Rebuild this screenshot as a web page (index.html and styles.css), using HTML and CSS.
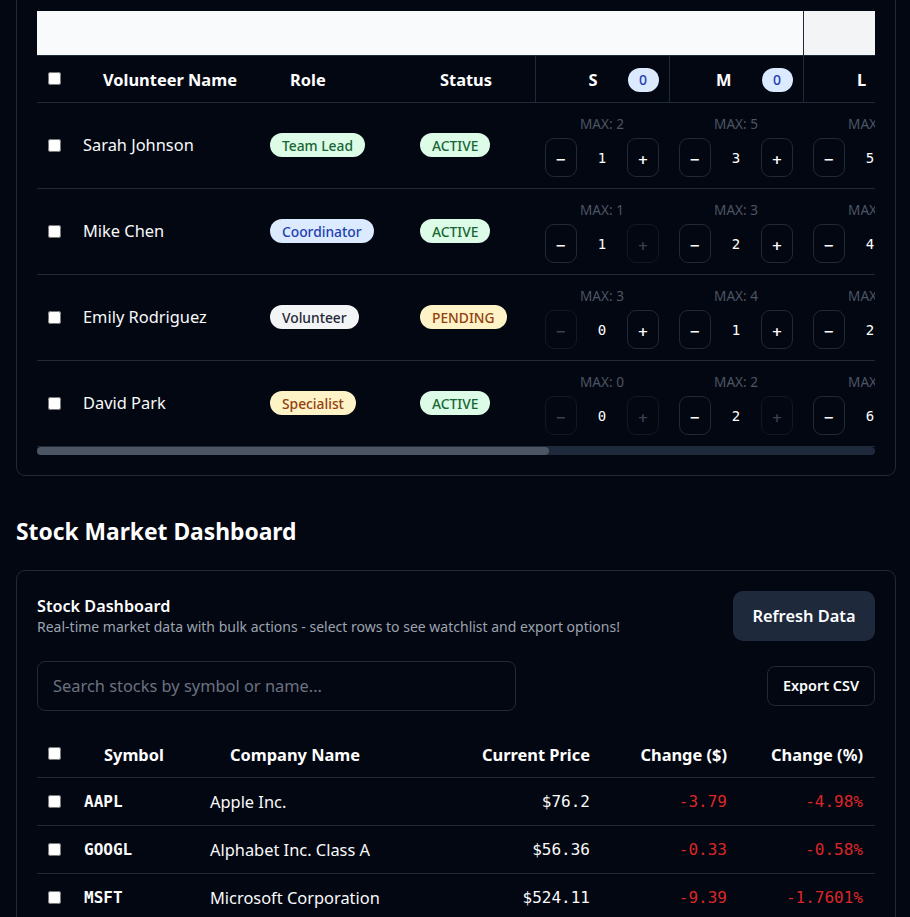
FILE: index.html
```html
<!DOCTYPE html>
<html lang="en">
<head>
<meta charset="utf-8">
<title>Dashboards</title>
<link rel="stylesheet" href="styles.css">
</head>
<body>
<div class="page">
  <section class="card card-volunteers">
    <div class="table-scroll">
      <table class="vtable">
        <colgroup>
          <col class="c-cb"><col class="c-name"><col class="c-role"><col class="c-status">
          <col class="c-size"><col class="c-size"><col class="c-size">
        </colgroup>
        <thead>
          <tr class="group-row">
            <th colspan="6" class="group-main"></th>
            <th class="group-alt"></th>
          </tr>
          <tr class="head-row">
            <th class="cb-cell"><input type="checkbox" class="cb"></th>
            <th>Volunteer Name</th>
            <th>Role</th>
            <th>Status</th>
            <th class="size-head"><div class="size-head-inner"><span>S</span><span class="count">0</span></div></th>
            <th class="size-head"><div class="size-head-inner"><span>M</span><span class="count">0</span></div></th>
            <th class="size-head"><div class="size-head-inner"><span>L</span><span class="count">0</span></div></th>
          </tr>
        </thead>
        <tbody>
          <tr>
            <td class="cb-cell"><input type="checkbox" class="cb"></td>
            <td class="name">Sarah Johnson</td>
            <td><span class="pill pill-green">Team Lead</span></td>
            <td><span class="pill pill-green upper">Active</span></td>
            <td class="size-cell"><div class="qty"><span class="max">MAX: 2</span><div class="stepper"><button class="step">−</button><span class="val">1</span><button class="step">+</button></div></div></td>
            <td class="size-cell"><div class="qty"><span class="max">MAX: 5</span><div class="stepper"><button class="step">−</button><span class="val">3</span><button class="step">+</button></div></div></td>
            <td class="size-cell"><div class="qty"><span class="max">MAX: 6</span><div class="stepper"><button class="step">−</button><span class="val">5</span><button class="step">+</button></div></div></td>
          </tr>
          <tr>
            <td class="cb-cell"><input type="checkbox" class="cb"></td>
            <td class="name">Mike Chen</td>
            <td><span class="pill pill-blue">Coordinator</span></td>
            <td><span class="pill pill-green upper">Active</span></td>
            <td class="size-cell"><div class="qty"><span class="max">MAX: 1</span><div class="stepper"><button class="step">−</button><span class="val">1</span><button class="step" disabled>+</button></div></div></td>
            <td class="size-cell"><div class="qty"><span class="max">MAX: 3</span><div class="stepper"><button class="step">−</button><span class="val">2</span><button class="step">+</button></div></div></td>
            <td class="size-cell"><div class="qty"><span class="max">MAX: 5</span><div class="stepper"><button class="step">−</button><span class="val">4</span><button class="step">+</button></div></div></td>
          </tr>
          <tr>
            <td class="cb-cell"><input type="checkbox" class="cb"></td>
            <td class="name">Emily Rodriguez</td>
            <td><span class="pill pill-gray">Volunteer</span></td>
            <td><span class="pill pill-yellow upper">Pending</span></td>
            <td class="size-cell"><div class="qty"><span class="max">MAX: 3</span><div class="stepper"><button class="step" disabled>−</button><span class="val">0</span><button class="step">+</button></div></div></td>
            <td class="size-cell"><div class="qty"><span class="max">MAX: 4</span><div class="stepper"><button class="step">−</button><span class="val">1</span><button class="step">+</button></div></div></td>
            <td class="size-cell"><div class="qty"><span class="max">MAX: 3</span><div class="stepper"><button class="step">−</button><span class="val">2</span><button class="step">+</button></div></div></td>
          </tr>
          <tr>
            <td class="cb-cell"><input type="checkbox" class="cb"></td>
            <td class="name">David Park</td>
            <td><span class="pill pill-yellow">Specialist</span></td>
            <td><span class="pill pill-green upper">Active</span></td>
            <td class="size-cell"><div class="qty"><span class="max">MAX: 0</span><div class="stepper"><button class="step" disabled>−</button><span class="val">0</span><button class="step" disabled>+</button></div></div></td>
            <td class="size-cell"><div class="qty"><span class="max">MAX: 2</span><div class="stepper"><button class="step">−</button><span class="val">2</span><button class="step" disabled>+</button></div></div></td>
            <td class="size-cell"><div class="qty"><span class="max">MAX: 8</span><div class="stepper"><button class="step">−</button><span class="val">6</span><button class="step">+</button></div></div></td>
          </tr>
        </tbody>
      </table>
    </div>
    <div class="hscroll"><div class="hscroll-thumb" style="width: 61.1%"></div></div>
  </section>

  <h2 class="section-title">Stock Market Dashboard</h2>

  <section class="card card-stocks">
    <div class="stocks-head">
      <div class="stocks-titles">
        <h3 class="stocks-title">Stock Dashboard</h3>
        <p class="stocks-sub">Real-time market data with bulk actions - select rows to see watchlist and export options!</p>
      </div>
      <button class="btn-refresh">Refresh Data</button>
    </div>
    <div class="stocks-tools">
      <input class="search" type="text" placeholder="Search stocks by symbol or name...">
      <button class="btn-export">Export CSV</button>
    </div>
    <table class="stable">
      <colgroup>
        <col class="s-cb"><col class="s-sym"><col class="s-co"><col class="s-price"><col class="s-chg"><col class="s-pct">
      </colgroup>
      <thead>
        <tr>
          <th class="cb-cell"><input type="checkbox" class="cb"></th>
          <th>Symbol</th>
          <th>Company Name</th>
          <th class="num">Current Price</th>
          <th class="num">Change ($)</th>
          <th class="num">Change (%)</th>
        </tr>
      </thead>
      <tbody>
        <tr>
          <td class="cb-cell"><input type="checkbox" class="cb"></td>
          <td class="sym">AAPL</td>
          <td>Apple Inc.</td>
          <td class="num mono">$76.2</td>
          <td class="num mono neg">-3.79</td>
          <td class="num mono neg">-4.98%</td>
        </tr>
        <tr>
          <td class="cb-cell"><input type="checkbox" class="cb"></td>
          <td class="sym">GOOGL</td>
          <td>Alphabet Inc. Class A</td>
          <td class="num mono">$56.36</td>
          <td class="num mono neg">-0.33</td>
          <td class="num mono neg">-0.58%</td>
        </tr>
        <tr>
          <td class="cb-cell"><input type="checkbox" class="cb"></td>
          <td class="sym">MSFT</td>
          <td>Microsoft Corporation</td>
          <td class="num mono">$524.11</td>
          <td class="num mono neg">-9.39</td>
          <td class="num mono neg">-1.7601%</td>
        </tr>
      </tbody>
    </table>
  </section>
</div>
</body>
</html>
```
FILE: styles.css
```css
* { box-sizing: border-box; }

html, body {
  margin: 0;
  background: #030712;
  color: #f9fafb;
  font-family: "Noto Sans", "Open Sans", sans-serif;
  font-size: 16.4px;
  overflow: hidden;
}

.page {
  padding: 0 14px 40px 16px;
}

.card {
  border: 1px solid #1f2937;
  border-radius: 9px;
  padding: 20px;
  background: #030712;
}

.card-volunteers {
  margin-top: -10px;
}

/* ---------- volunteer table ---------- */
.table-scroll {
  overflow: hidden;
}

.vtable {
  border-collapse: collapse;
  table-layout: fixed;
  width: 900px;
}

.c-cb { width: 34px; }
.c-name { width: 187px; }
.c-role { width: 150px; }
.c-status { width: 127px; }
.c-size { width: 134px; }

.group-row th {
  height: 44px;
  padding: 0;
}
.group-main { background: #f9fafb; }
.group-alt { background: #f3f4f6; border-left: 1px solid #1f2937; }

.vtable th,
.stable th {
  text-align: left;
  font-weight: 700;
  line-height: 22px;
  padding: 13px 12px 11px 32px;
  border-bottom: 1px solid #1f2937;
  color: #ffffff;
  white-space: nowrap;
}

.vtable .head-row th { height: 47px; }

.vtable th.cb-cell,
.stable th.cb-cell,
.cb-cell {
  padding: 0 0 0 11px;
  vertical-align: middle;
}

.cb {
  margin: 0;
  width: 13px;
  height: 13px;
  display: block;
}

.vtable .size-head {
  border-left: 1px solid #1f2937;
  padding: 11px 10px 9px 12px;
}

.size-head-inner {
  display: flex;
  justify-content: flex-end;
  align-items: center;
  gap: 30px;
}

.count {
  display: inline-flex;
  align-items: center;
  justify-content: center;
  min-width: 31px;
  height: 24px;
  padding: 0 9px;
  border-radius: 12px;
  background: #dbeafe;
  color: #1e40af;
  font-weight: 500;
  font-size: 14px;
}

.vtable td {
  border-bottom: 1px solid #1f2937;
  padding: 12px;
  vertical-align: middle;
  height: 86px;
  white-space: nowrap;
}

.vtable td.cb-cell { padding: 1px 0 0 11px; }

.name {
  color: #f9fafb;
  line-height: 22px;
}

.pill {
  display: inline-flex;
  align-items: center;
  height: 24px;
  padding: 0 12px;
  border-radius: 12px;
  font-size: 13.8px;
  font-weight: 500;
  line-height: 1;
}
.upper { text-transform: uppercase; }
.pill-green { background: #dcfce7; color: #166534; }
.pill-blue { background: #dbeafe; color: #1e40af; }
.pill-gray { background: #f3f4f6; color: #1f2937; }
.pill-yellow { background: #fef3c7; color: #92400e; }

.vtable td.size-cell {
  padding: 11px 10px 10px;
}

.qty {
  display: flex;
  flex-direction: column;
  align-items: center;
  gap: 4px;
}

.max {
  font-size: 13.6px;
  line-height: 20px;
  color: #4b5563;
}

.stepper {
  display: flex;
  align-items: center;
}

.step {
  width: 32px;
  height: 39px;
  padding: 4px 0 0;
  border: 1px solid #1f2937;
  border-radius: 9px;
  background: transparent;
  color: #ffffff;
  font-family: "DejaVu Sans", sans-serif;
  font-size: 13px;
  font-weight: 700;
  line-height: 1;
}
.step:disabled {
  border-color: #111827;
  color: #374151;
}

.val {
  width: 50px;
  text-align: center;
  font-family: "DejaVu Sans Mono", monospace;
  font-size: 14px;
  color: #ffffff;
}

.hscroll {
  height: 8px;
  border-radius: 4px;
  background: #1e293b;
}
.hscroll-thumb {
  height: 100%;
  border-radius: 4px;
  background: #4b5563;
}

/* ---------- section heading ---------- */
.section-title {
  margin: 40px 0 22px;
  font-size: 22.8px;
  line-height: 32px;
  font-weight: 700;
  color: #ffffff;
}

/* ---------- stocks card ---------- */
.stocks-head {
  display: flex;
  justify-content: space-between;
  align-items: center;
}

.stocks-title {
  margin: 0;
  font-size: 16.2px;
  line-height: 22px;
  font-weight: 600;
  color: #ffffff;
}

.stocks-sub {
  margin: 0;
  font-size: 14px;
  line-height: 20px;
  color: #9ca3af;
}

.btn-refresh {
  height: 50px;
  width: 142px;
  border: 0;
  border-radius: 10px;
  background: #1e293b;
  color: #ffffff;
  font-family: inherit;
  font-size: 16.4px;
  font-weight: 600;
}

.stocks-tools {
  display: flex;
  justify-content: space-between;
  align-items: center;
  margin-top: 20px;
}

.search {
  width: 479px;
  height: 50px;
  padding: 0 15px;
  border: 1px solid #1f2937;
  border-radius: 8px;
  background: transparent;
  color: #f9fafb;
  font-family: inherit;
  font-size: 16.4px;
  outline: none;
}
.search::placeholder { color: #6b7280; }

.btn-export {
  width: 108px;
  height: 40px;
  border: 1px solid #1f2937;
  border-radius: 8px;
  background: transparent;
  color: #ffffff;
  font-family: inherit;
  font-size: 14.4px;
  font-weight: 600;
}

.stable {
  margin-top: 20px;
  width: 100%;
  border-collapse: collapse;
  table-layout: fixed;
}

.s-cb { width: 35px; }
.s-sym { width: 126px; }
.s-co { width: 195px; }
.s-price { width: 209px; }
.s-chg { width: 137px; }
.s-pct { width: 136px; }

.stable th { height: 47px; }

.stable th.num,
.stable td.num {
  text-align: right;
  padding-right: 12px;
}
.stable th.num { padding-left: 12px; }

.stable td {
  border-bottom: 1px solid #1f2937;
  padding: 12px;
  height: 48px;
  line-height: 22px;
  white-space: nowrap;
}
.stable td.cb-cell { padding: 0 0 0 11px; }

.sym {
  font-family: "DejaVu Sans Mono", monospace;
  font-weight: 700;
  font-size: 16px;
}

.mono {
  font-family: "DejaVu Sans Mono", monospace;
  font-size: 16px;
}

.neg { color: #dc2626; }
```
